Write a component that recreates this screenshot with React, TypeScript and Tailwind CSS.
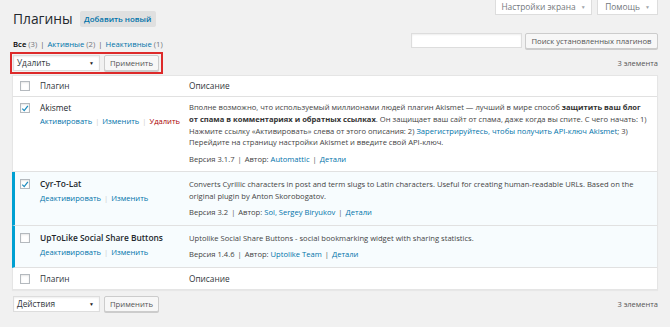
import React from "react";

function Check({ checked }: { checked?: boolean }) {
  return (
    <div className="w-[10px] h-[10px] border border-[#b4b9be] bg-white shadow-[inset_0_1px_2px_rgba(0,0,0,0.1)] flex items-center justify-center">
      {checked && (
        <svg width="9" height="9" viewBox="0 0 10 10">
          <path d="M1.6 5.2 L4 7.6 L8.6 1.8" fill="none" stroke="#1e8cbe" strokeWidth="1.6" />
        </svg>
      )}
    </div>
  );
}

function Sep() {
  return <span className="text-[#ccc] mx-[3px]">|</span>;
}

function DSep() {
  return <span className="text-[#555] mx-[3px]">|</span>;
}

function Select({ label }: { label: string }) {
  return (
    <div className="w-[87px] h-[16px] border border-[#ddd] bg-white shadow-[inset_0_1px_2px_rgba(0,0,0,0.07)] flex items-center justify-between pl-[3px] pr-[5px] text-[#32373c] text-[8.3px]">
      <span>{label}</span>
      <span className="text-[5px] text-[#222]">▼</span>
    </div>
  );
}

function Btn({ label, w }: { label: string; w: string }) {
  return (
    <div className={`${w} h-[16px] border border-[#ccc] bg-[#f7f7f7] shadow-[0_1px_0_#ccc] rounded-[2px] flex items-center justify-center text-[#555] text-[7.7px]`}>
      {label}
    </div>
  );
}

export default function App() {
  return (
    <div className="w-[670px] h-[327px] overflow-hidden bg-[#f1f1f1] text-[#444] font-['Open_Sans',sans-serif] text-[7.6px] leading-[12px] px-[12px]">
      {/* header */}
      <div className="flex justify-between h-[28px]">
        <div className="flex items-center pt-[10px] gap-[7px]">
          <h1 className="text-[13.8px] leading-[18px] text-[#23282d] ml-[1px]">Плагины</h1>
          <div className="h-[16px] w-[76px] bg-[#e0e0e0] text-[#0073aa] font-semibold text-[7.9px] flex items-center justify-center rounded-[2px]">
            Добавить новый
          </div>
        </div>
        <div className="flex gap-[5px] items-start">
          <div className="w-[97px] h-[15px] bg-white border border-t-0 border-[#ddd] flex items-center justify-center gap-[5px] text-[#72777c] text-[8.4px]">
            <span>Настройки экрана</span>
            <span className="text-[5px] text-[#a0a5aa]">▼</span>
          </div>
          <div className="w-[61px] h-[15px] bg-white border border-t-0 border-[#ddd] flex items-center justify-center gap-[5px] text-[#72777c] text-[8.4px]">
            <span>Помощь</span>
            <span className="text-[5px] text-[#a0a5aa]">▼</span>
          </div>
        </div>
      </div>

      {/* filters + search */}
      <div className="flex justify-between items-end mt-[5px] h-[16px]">
        <div className="pl-[1px] text-[7.7px] leading-[12px] translate-y-[1px]">
          <span className="font-semibold text-[#000]">Все</span> <span className="text-[#72777c]">(3)</span>
          <DSep />
          <span className="text-[#0073aa]">Активные</span> <span className="text-[#72777c]">(2)</span>
          <DSep />
          <span className="text-[#0073aa]">Неактивные</span> <span className="text-[#72777c]">(1)</span>
        </div>
        <div className="flex gap-[3px] items-start h-[16px]">
          <div className="w-[111px] h-[15px] bg-white border border-[#ddd] shadow-[inset_0_1px_2px_rgba(0,0,0,0.07)]" />
          <Btn label="Поиск установленных плагинов" w="w-[133px]" />
        </div>
      </div>

      {/* tablenav top */}
      <div className="flex justify-between items-center mt-[3px] h-[22px]">
        <div className="-ml-[2px] border-2 border-[#dd2a2a] p-[1px] pr-[2px] flex gap-[4px]">
          <Select label="Удалить" />
          <Btn label="Применить" w="w-[55px]" />
        </div>
        <div className="text-[#555] text-[7.5px]">3 элемента</div>
      </div>

      {/* table */}
      <div className="mt-[1px] bg-white border-y border-r border-[#e5e5e5] shadow-[0_1px_1px_rgba(0,0,0,0.04)]">
        {/* head */}
        <div className="flex h-[21px] items-center border-b border-[#e1e1e1] border-l border-l-[#e5e5e5] text-[#32373c] text-[8.3px]">
          <div className="w-[27px] shrink-0 pl-[7px]"><Check /></div>
          <div className="w-[149px] shrink-0">Плагин</div>
          <div>Описание</div>
        </div>

        {/* Akismet */}
        <div className="flex border-b border-[#e1e1e1] border-l border-l-[#e5e5e5] pt-[5px] pb-[6px]">
          <div className="w-[27px] shrink-0 pl-[7px] pt-[1px]"><Check checked /></div>
          <div className="w-[149px] shrink-0">
            <div className="text-[#23282d] text-[8.4px]">Akismet</div>
            <div className="mt-[1px]">
              <span className="text-[#0073aa]">Активировать</span>
              <Sep />
              <span className="text-[#0073aa]">Изменить</span>
              <Sep />
              <span className="text-[#a00]">Удалить</span>
            </div>
          </div>
          <div className="flex-1 min-w-0 pr-[6px] text-[#444] whitespace-nowrap">
            <div className="leading-[11.8px]">
              Вполне возможно, что используемый миллионами людей плагин Akismet — лучший в мире способ <b className="text-[#333]">защитить ваш блог</b><br />
              <b className="text-[#333]">от спама в комментариях и обратных ссылках</b>. Он защищает ваш сайт от спама, даже когда вы спите. С чего начать: 1)<br />
              Нажмите ссылку «Активировать» слева от этого описания: 2) <span className="text-[#0073aa]">Зарегистрируйтесь, чтобы получить API-ключ Akismet</span>; 3)<br />
              Перейдите на страницу настройки Akismet и введите свой API-ключ.
            </div>
            <div className="mt-[4px]">
              Версия 3.1.7<DSep />Автор: <span className="text-[#0073aa]">Automattic</span><DSep /><span className="text-[#0073aa]">Детали</span>
            </div>
          </div>
        </div>

        {/* Cyr-To-Lat */}
        <div className="flex border-b border-[#e1e1e1] border-l-[3px] border-l-[#00a0d2] bg-[#f7fcfe] pt-[6px] pb-[7px]">
          <div className="w-[25px] shrink-0 pl-[5px] pt-[1px]"><Check checked /></div>
          <div className="w-[149px] shrink-0">
            <div className="text-[#23282d] font-semibold text-[8.4px]">Cyr-To-Lat</div>
            <div className="mt-[2px]">
              <span className="text-[#0073aa]">Деактивировать</span>
              <Sep />
              <span className="text-[#0073aa]">Изменить</span>
            </div>
          </div>
          <div className="flex-1 min-w-0 pr-[6px] text-[#444] whitespace-nowrap">
            <div>
              Converts Cyrillic characters in post and term slugs to Latin characters. Useful for creating human-readable URLs. Based on the<br />
              original plugin by Anton Skorobogatov.
            </div>
            <div className="mt-[4px]">
              Версия 3.2<DSep />Автор: <span className="text-[#0073aa]">Sol, Sergey Biryukov</span><DSep /><span className="text-[#0073aa]">Детали</span>
            </div>
          </div>
        </div>

        {/* UpToLike */}
        <div className="flex border-b border-[#e1e1e1] border-l-[3px] border-l-[#00a0d2] bg-[#f7fcfe] pt-[6px] pb-[7px]">
          <div className="w-[25px] shrink-0 pl-[5px] pt-[1px]"><Check /></div>
          <div className="w-[149px] shrink-0">
            <div className="text-[#23282d] font-semibold text-[8.4px]">UpToLike Social Share Buttons</div>
            <div className="mt-[2px]">
              <span className="text-[#0073aa]">Деактивировать</span>
              <Sep />
              <span className="text-[#0073aa]">Изменить</span>
            </div>
          </div>
          <div className="flex-1 min-w-0 pr-[6px] text-[#444] whitespace-nowrap">
            <div>Uptolike Social Share Buttons - social bookmarking widget with sharing statistics.</div>
            <div className="mt-[4px]">
              Версия 1.4.6<DSep />Автор: <span className="text-[#0073aa]">Uptolike Team</span><DSep /><span className="text-[#0073aa]">Детали</span>
            </div>
          </div>
        </div>

        {/* foot */}
        <div className="flex h-[21px] items-center border-l border-l-[#e5e5e5] text-[#32373c] text-[8.3px]">
          <div className="w-[27px] shrink-0 pl-[7px]"><Check /></div>
          <div className="w-[149px] shrink-0">Плагин</div>
          <div>Описание</div>
        </div>
      </div>

      {/* tablenav bottom */}
      <div className="flex justify-between items-center mt-[6px] h-[16px]">
        <div className="flex gap-[4px] pl-[1px]">
          <Select label="Действия" />
          <Btn label="Применить" w="w-[55px]" />
        </div>
        <div className="text-[#555] text-[7.5px]">3 элемента</div>
      </div>
    </div>
  );
}
